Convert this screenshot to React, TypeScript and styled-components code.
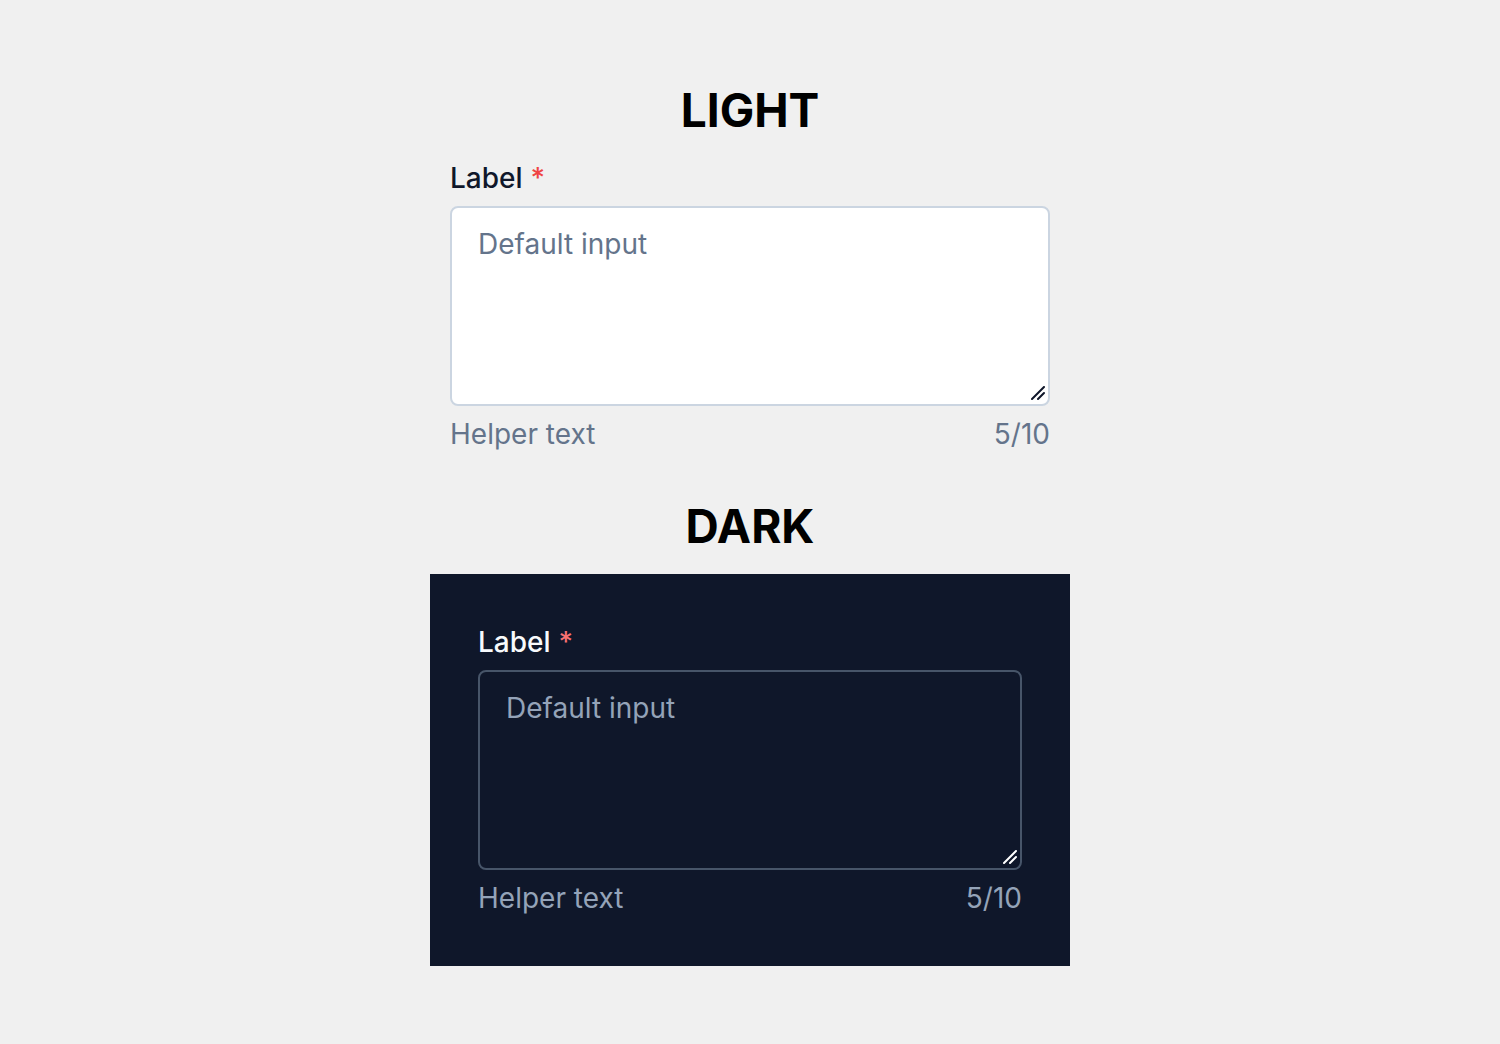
import styled, { createGlobalStyle } from 'styled-components';

import type { ReactElement } from 'react';

type Mode = 'light' | 'dark';

const palette = {
  light: {
    label: '#0f172a',
    required: '#ef4444',
    border: '#cbd5e1',
    field: '#ffffff',
    placeholder: '#64748b',
    helper: '#64748b',
    grip: '#0f172a',
  },
  dark: {
    label: '#f8fafc',
    required: '#f87171',
    border: '#475569',
    field: 'transparent',
    placeholder: '#94a3b8',
    helper: '#94a3b8',
    grip: '#ffffff',
  },
};

const GlobalStyle = createGlobalStyle`
  html, body {
    margin: 0;
    background: #f0f0f0;
    font-family: Inter, "Noto Sans", sans-serif;
  }
`;

const Page = styled.main`
  width: 600px;
  margin: 0 auto;
  padding: 82px 0 40px;
  display: flex;
  flex-direction: column;
`;

const Section = styled.section`
  display: flex;
  flex-direction: column;
  & + & {
    margin-top: 44px;
  }
`;

const Heading = styled.h2`
  margin: 0 0 20px;
  text-align: center;
  font-size: 46px;
  line-height: 56px;
  font-weight: 700;
  color: #000;
`;

const DarkPanel = styled.div`
  margin: 0 -20px;
  padding: 48px;
  background: #0f172a;
  color-scheme: dark;
`;

const Field = styled.div`
  display: flex;
  flex-direction: column;
  gap: 8px;
`;

const Label = styled.label<{ $mode: Mode }>`
  font-size: 28px;
  line-height: 40px;
  font-weight: 500;
  color: ${p => palette[p.$mode].label};
`;

const Required = styled.span<{ $mode: Mode }>`
  margin-left: 8px;
  color: ${p => palette[p.$mode].required};
`;

const AreaWrap = styled.div`
  position: relative;
`;

const TextArea = styled.textarea<{ $mode: Mode }>`
  box-sizing: border-box;
  display: block;
  width: 100%;
  height: 200px;
  margin: 0;
  padding: 16px 26px;
  border: 2px solid ${p => palette[p.$mode].border};
  border-radius: 8px;
  background: ${p => palette[p.$mode].field};
  color: ${p => palette[p.$mode].label};
  font-family: inherit;
  font-size: 28px;
  line-height: 40px;
  outline: none;
  resize: none;

  &::placeholder {
    color: ${p => palette[p.$mode].placeholder};
    opacity: 1;
  }
`;

// resize grip drawn over the bottom-right corner of the textarea
const Grip = styled.svg`
  position: absolute;
  right: 5px;
  bottom: 6px;
  width: 14px;
  height: 14px;
  pointer-events: none;
`;

const HelperRow = styled.div<{ $mode: Mode }>`
  display: flex;
  justify-content: space-between;
  font-size: 28px;
  line-height: 40px;
  color: ${p => palette[p.$mode].helper};
`;

function TextField({ mode, id }: { mode: Mode; id: string }): ReactElement {
  const grip = palette[mode].grip;
  return (
    <Field>
      <Label htmlFor={id} $mode={mode}>
        Label<Required $mode={mode}>*</Required>
      </Label>
      <AreaWrap>
        <TextArea id={id} $mode={mode} placeholder='Default input' />
        <Grip viewBox='0 0 14 14'>
          <path d='M1 13 L13 1 M7 13 L13 7' stroke={grip} strokeWidth='2' strokeLinecap='round' fill='none' />
        </Grip>
      </AreaWrap>
      <HelperRow $mode={mode}>
        <span>Helper text</span>
        <span>5/10</span>
      </HelperRow>
    </Field>
  );
}

export default function App(): ReactElement {
  return (
    <>
      <GlobalStyle />
      <Page>
        <Section>
          <Heading>LIGHT</Heading>
          <TextField mode='light' id='field-light' />
        </Section>
        <Section>
          <Heading>DARK</Heading>
          <DarkPanel>
            <TextField mode='dark' id='field-dark' />
          </DarkPanel>
        </Section>
      </Page>
    </>
  );
}
